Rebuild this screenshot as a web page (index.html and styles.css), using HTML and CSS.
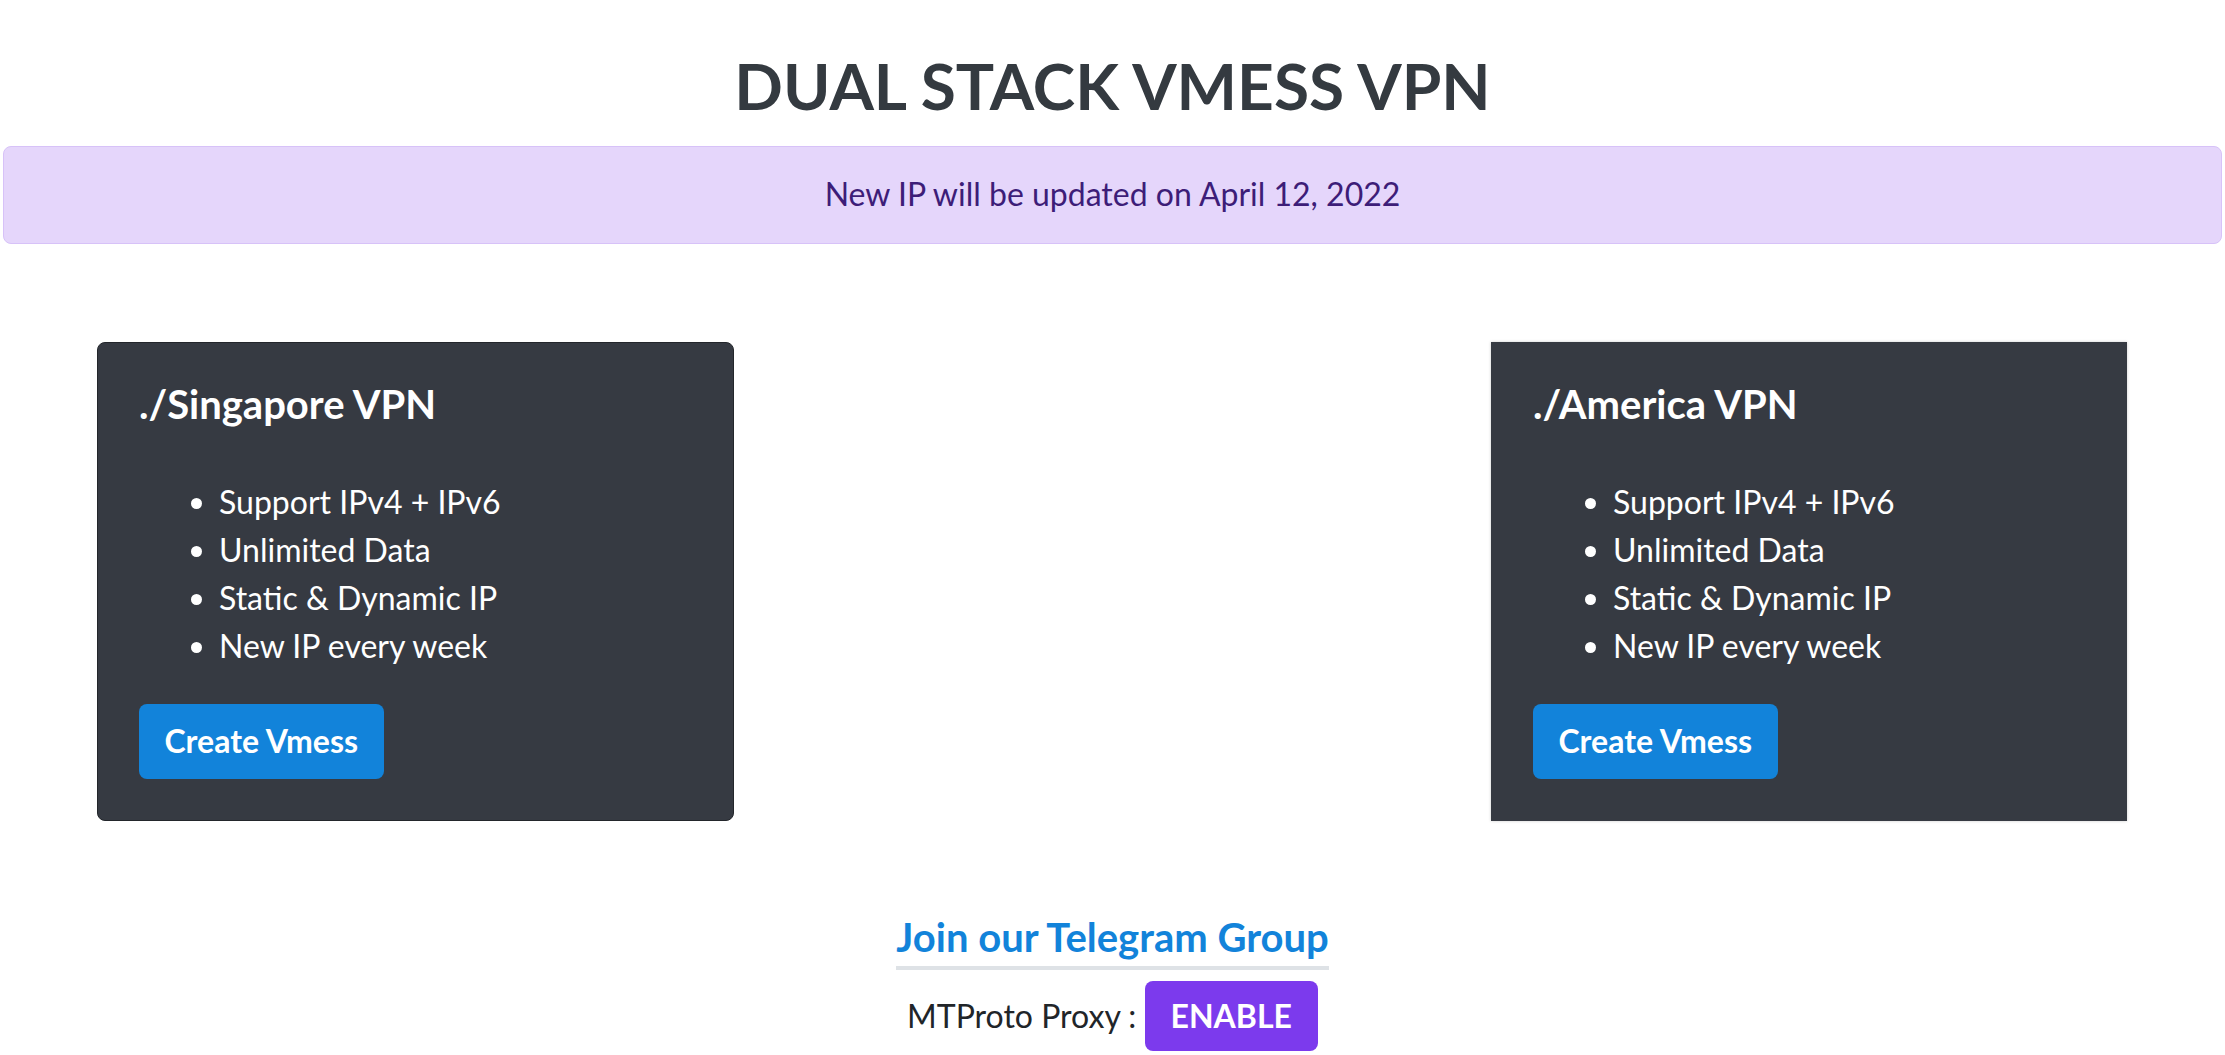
FILE: index.html
```html
<!DOCTYPE html>
<html lang="en">
<head>
<meta charset="utf-8">
<title>Dual Stack VMess VPN</title>
<link rel="stylesheet" href="styles.css">
</head>
<body>
<header class="page-head">
  <h1 class="page-title">DUAL STACK VMESS VPN</h1>
</header>
<div class="notice">New IP will be updated on April 12, 2022</div>
<main class="servers">
  <section class="server-card server-card--rounded">
    <h2 class="server-title">./Singapore VPN</h2>
    <ul class="features">
      <li>Support IPv4 + IPv6</li>
      <li>Unlimited Data</li>
      <li>Static &amp; Dynamic IP</li>
      <li>New IP every week</li>
    </ul>
    <a class="btn-create" href="#">Create Vmess</a>
  </section>
  <section class="server-card server-card--flat">
    <h2 class="server-title">./America VPN</h2>
    <ul class="features">
      <li>Support IPv4 + IPv6</li>
      <li>Unlimited Data</li>
      <li>Static &amp; Dynamic IP</li>
      <li>New IP every week</li>
    </ul>
    <a class="btn-create" href="#">Create Vmess</a>
  </section>
</main>
<footer class="community">
  <a class="tg-link" href="#">Join our Telegram Group</a>
  <div class="proxy-row">MTProto Proxy : <a class="btn-enable" href="#">ENABLE</a></div>
</footer>
</body>
</html>
```
FILE: styles.css
```css
* { box-sizing: border-box; }
html, body { margin: 0; padding: 0; background: #ffffff; }
body {
  font-family: Lato, "Open Sans", "Liberation Sans", sans-serif;
  color: #212529;
}
a { text-decoration: none; }

.page-head { text-align: center; }
.page-title {
  margin: 48px 0 0;
  font-size: 64px;
  font-weight: 700;
  line-height: 1.2;
  color: #343a40;
}

.notice {
  margin: 21px 3px 0;
  padding: 23px 16px 25px;
  border: 1px solid #d7c2f8;
  border-radius: 8px;
  background: #e5d6fb;
  color: #3d1d78;
  font-size: 32px;
  line-height: 48px;
  text-align: center;
}

.servers {
  display: flex;
  justify-content: space-between;
  margin-top: 98px;
  padding: 0 98px 0 97px;
}
.server-card {
  width: 637px;
  padding: 37px 41px 41px;
  background: #363a42;
  color: #ffffff;
}
.server-card--rounded {
  border: 1px solid #23262b;
  border-radius: 8px;
}
.server-card--flat {
  width: 636px;
  border: 1px solid #363a42;
  box-shadow: 0 0 3px rgba(0, 0, 0, 0.2);
}
.server-title {
  margin: 0;
  font-size: 40px;
  font-weight: 700;
  line-height: 48px;
}
.features {
  margin: 50px 0 0;
  padding-left: 80px;
  font-size: 32px;
  line-height: 48px;
}
.btn-create {
  display: inline-block;
  margin-top: 34px;
  padding: 13.5px 25.5px;
  border-radius: 8px;
  background: #1283da;
  color: #ffffff;
  font-size: 32px;
  font-weight: 700;
  line-height: 48px;
}

.community {
  margin-top: 92.5px;
  text-align: center;
}
.tg-link {
  display: inline-block;
  padding-bottom: 4.5px;
  border-bottom: 4px solid #dee2e6;
  color: #1283da;
  font-size: 40px;
  font-weight: 700;
  line-height: 48px;
}
.proxy-row {
  margin-top: 11px;
  font-size: 32px;
  line-height: 48px;
  color: #212529;
}
.btn-enable {
  display: inline-block;
  padding: 11px 26px;
  border-radius: 8px;
  background: #7c3aed;
  color: #ffffff;
  font-weight: 700;
  line-height: 48px;
}
```
